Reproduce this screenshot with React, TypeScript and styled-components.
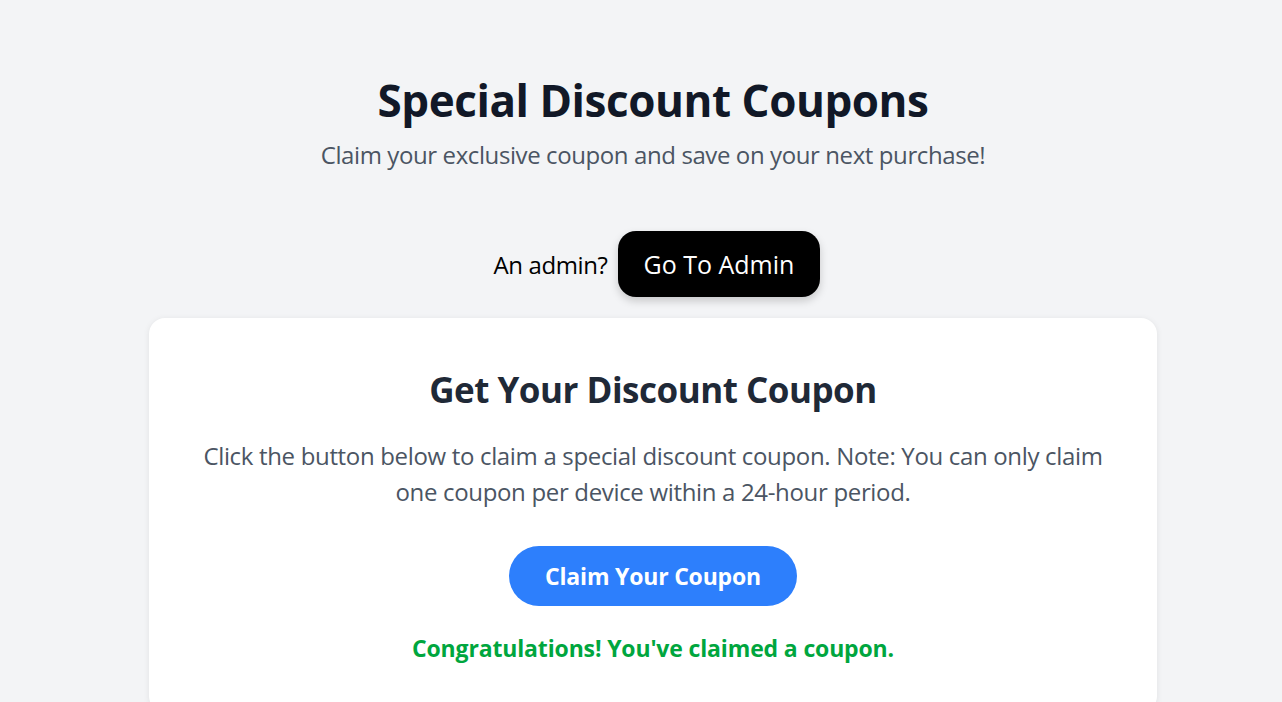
import React from "react";
import styled, { createGlobalStyle } from "styled-components";

const Global = createGlobalStyle`
  html, body { margin: 0; padding: 0; background: #f3f4f6; }
  body { font-family: "Open Sans", "Noto Sans", sans-serif; }
  * { box-sizing: border-box; }
`;

const Page = styled.div`
  display: flex;
  flex-direction: column;
  align-items: center;
  padding: 72px 0 40px 24px;
`;

const Title = styled.h1`
  margin: 0;
  font-size: 44px;
  line-height: 56px;
  font-weight: 700;
  color: #111827;
  letter-spacing: -0.45px;
`;

const Subtitle = styled.p`
  margin: 11px 0 0;
  font-size: 24px;
  line-height: 32px;
  color: #4b5563;
  letter-spacing: -0.4px;
`;

const AdminRow = styled.div`
  margin-top: 60px;
  padding-left: 8px;
  display: flex;
  align-items: center;
  gap: 10px;
  font-size: 24px;
  color: #000;
`;

const AdminLabel = styled.span`
  letter-spacing: -0.4px;
`;

const AdminButton = styled.button`
  font-family: inherit;
  font-size: 25px;
  color: #fff;
  background: #000;
  border: none;
  border-radius: 18px;
  height: 66px;
  padding: 0 26px;
  letter-spacing: 0;
  box-shadow: 0 4px 8px rgba(0, 0, 0, 0.18);
  cursor: pointer;
`;

const Card = styled.section`
  margin-top: 21px;
  width: 1008px;
  background: #fff;
  border-radius: 16px;
  box-shadow: 0 1px 6px rgba(0, 0, 0, 0.08);
  padding: 49px 48px 48px;
  display: flex;
  flex-direction: column;
  align-items: center;
  text-align: center;
`;

const CardTitle = styled.h2`
  margin: 0;
  font-size: 35px;
  line-height: 46px;
  font-weight: 700;
  color: #1f2937;
  letter-spacing: -0.5px;
`;

const CardText = styled.p`
  margin: 25px 0 0;
  font-size: 24px;
  line-height: 36px;
  color: #4b5563;
  letter-spacing: -0.33px;
`;

const ClaimButton = styled.button`
  margin-top: 36px;
  font-family: inherit;
  font-size: 23px;
  font-weight: 700;
  color: #fff;
  background: #2d7ffc;
  border: none;
  border-radius: 999px;
  width: 288px;
  height: 60px;
  letter-spacing: -0.2px;
  cursor: pointer;
`;

const Success = styled.p`
  margin: 26px 0 0;
  font-size: 23px;
  line-height: 32px;
  font-weight: 700;
  color: #00a63e;
  letter-spacing: -0.15px;
`;

export default function App() {
  return (
    <>
      <Global />
      <Page>
        <Title>Special Discount Coupons</Title>
        <Subtitle>Claim your exclusive coupon and save on your next purchase!</Subtitle>
        <AdminRow>
          <AdminLabel>An admin?</AdminLabel>
          <AdminButton>Go To Admin</AdminButton>
        </AdminRow>
        <Card>
          <CardTitle>Get Your Discount Coupon</CardTitle>
          <CardText>
            Click the button below to claim a special discount coupon. Note: You can only claim
            one coupon per device within a 24-hour period.
          </CardText>
          <ClaimButton>Claim Your Coupon</ClaimButton>
          <Success>Congratulations! You've claimed a coupon.</Success>
        </Card>
      </Page>
    </>
  );
}
